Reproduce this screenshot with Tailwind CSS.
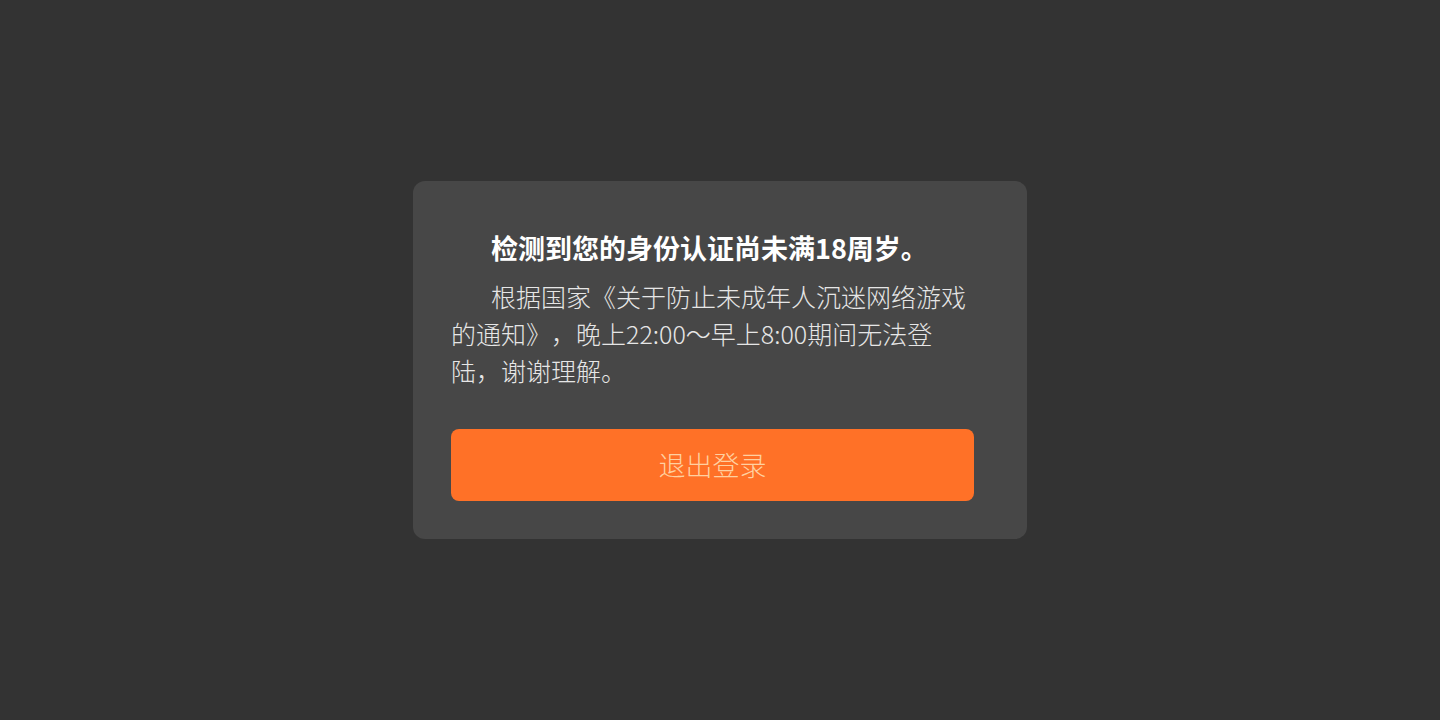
<!DOCTYPE html>
<html lang="zh-CN">
  <head>
    <meta charset="UTF-8" />
    <meta name="viewport" content="width=device-width, initial-scale=1.0" />
    <title>身份认证提示</title>
    <script src="https://cdn.jsdelivr.net/npm/@tailwindcss/browser@4"></script>
  </head>
  <body
    class="min-h-screen flex items-center justify-center bg-[#333333] font-['Noto_Sans_CJK_SC',sans-serif]"
  >
    <!-- Modal -->
    <main
      role="dialog"
      aria-labelledby="title"
      class="w-full max-w-[614px] rounded-xl bg-[#474747] pt-12 pr-[53px] pb-[38px] pl-[38px]"
    >
      <h1
        id="title"
        class="indent-10 text-[27px] leading-[37px] font-bold text-white"
      >
        检测到您的身份认证尚未满18周岁。
      </h1>
      <p
        class="mt-3 mb-10 indent-10 text-[25px] leading-[37px] font-light text-[#e6e6e6] [text-spacing-trim:space-all]"
      >
        根据国家《关于防止未成年人沉迷网络游戏的通知》，晚上22:00～早上8:00期间无法登<br />陆，谢谢理解。
      </p>
      <button
        type="button"
        class="h-[72px] w-full rounded-lg bg-[#ff7127] text-[27px] font-light text-[#ffd0a0] cursor-pointer"
      >
        退出登录
      </button>
    </main>
  </body>
</html>
